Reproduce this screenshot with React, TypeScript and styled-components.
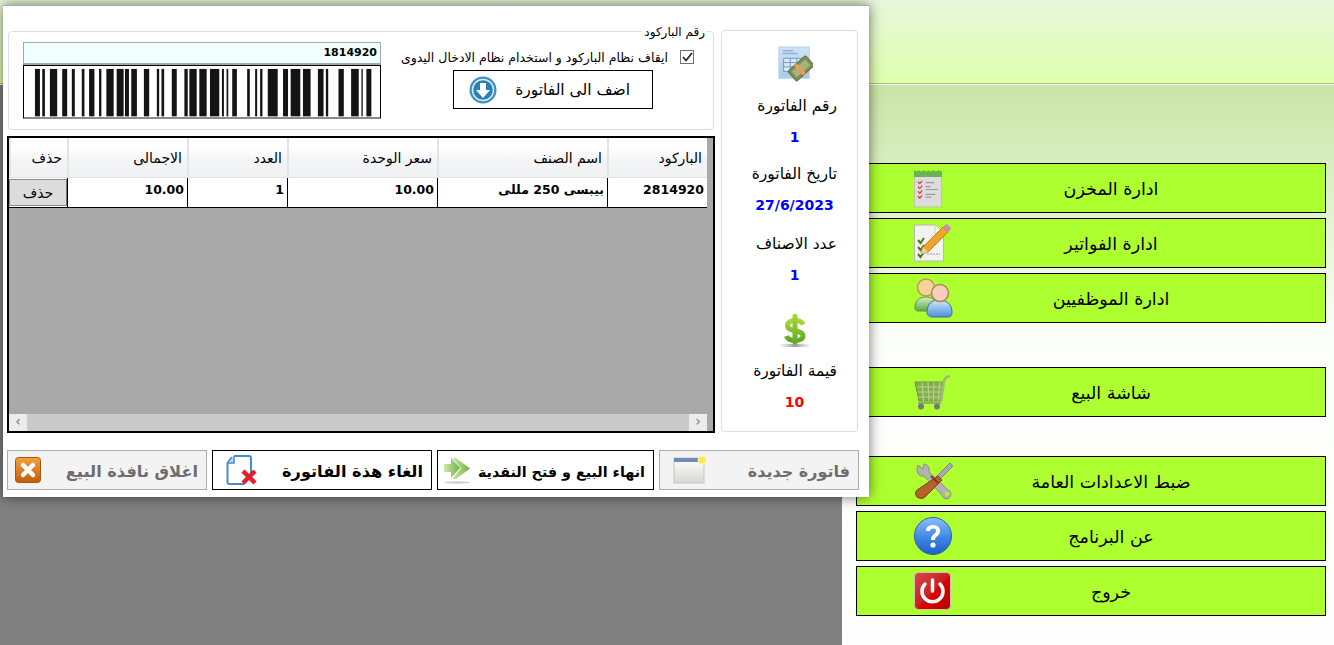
import { FC, ReactNode } from "react";
import styled, { createGlobalStyle } from "styled-components";

const GlobalStyle = createGlobalStyle`
	html, body {
		margin:0;
		padding:0;
		background:#fff;
		font-family:"DejaVu Sans", "Noto Sans", sans-serif;
	}
`;

const BARS:[number, number][] = [
	[103,118],[125,133],[148,170],[185,200],[214,223],[244,252],[266,282],[296,303],[318,340],[349,370],
	[374,386],[393,410],[431,447],[470,477],[484,492],[515,530],[553,563],[568,590],[598,620],[630,658],
	[666,672],[680,685],[697,711],[742,750],[766,772],[781,788],[804,834],[850,865],[873,902],[910,933],
	[955,972],[979,986],[1017,1033],[1055,1078],[1086,1090],[1101,1116],
];

const Barcode:FC = () => (
	<BarcodeSvg viewBox="70 198 1072 156" preserveAspectRatio="none">
		{ BARS.map(([a, b]) => (
			<rect key={ a } x={ a } y={ 207 } width={ b - a } height={ 145 } fill="#141414"/>
		)) }
	</BarcodeSvg>
);

const InvoiceIcon:FC = () => (
	<svg width="36" height="36" viewBox="0 0 38 38">
		<defs>
			<linearGradient id="inv" x1="0" y1="0" x2="0" y2="1">
				<stop offset="0" stopColor="#cfe2f5"/>
				<stop offset="1" stopColor="#a9cbec"/>
			</linearGradient>
		</defs>
		<rect x="2" y="1" width="32" height="33" fill="url(#inv)" stroke="#b6d0ea"/>
		<path d="M6 5h11M6 8h16" stroke="#8fb2d4" strokeWidth="1.5"/>
		<path d="M7 13h21v14H7zM7 17.500h21M7 22h21M14 13v14M21 13v14" fill="#dbe9f7" stroke="#6f95bd"/>
		<g transform="rotate(-42 25 24)">
			<rect x="13" y="17" width="25" height="14" rx="1" fill="#7f8f55" stroke="#5e6d3c"/>
			<rect x="16" y="20" width="19" height="8" fill="#a7b37b"/>
			<rect x="22" y="17" width="4" height="14" fill="#ef9a5c"/>
		</g>
	</svg>
);

const DollarIcon:FC = () => (
	<svg width="34" height="34" viewBox="0 0 34 34">
		<defs>
			<linearGradient id="dol" x1="0" y1="0" x2="0" y2="1">
				<stop offset="0" stopColor="#a6d93a"/>
				<stop offset="1" stopColor="#62a823"/>
			</linearGradient>
			<linearGradient id="dolShadow" x1="0" y1="0" x2="1" y2="0">
				<stop offset="0" stopColor="#aaa" stopOpacity="0"/>
				<stop offset=".5" stopColor="#999"/>
				<stop offset="1" stopColor="#aaa" stopOpacity="0"/>
			</linearGradient>
		</defs>
		<path d="M25 11.500C24 8.500 21 7.500 17 7.500c-4.500 0-7.500 2-7.500 5 0 7 15.500 3.500 15.500 10.500 0 3-3.500 4.500-8 4.500-4.500 0-7.500-1.500-8.500-4.500" fill="none" stroke="url(#dol)" strokeWidth="5"/>
		<rect x="14.500" y="1" width="5" height="30" rx="1.500" fill="url(#dol)"/>
		<rect x="1" y="31" width="32" height="3" fill="url(#dolShadow)"/>
	</svg>
);

const DownCircleIcon:FC = () => (
	<svg width="28" height="28" viewBox="0 0 28 28">
		<circle cx="14" cy="14" r="13.500" fill="#3d8fc4"/>
		<circle cx="14" cy="14" r="10.500" fill="#2f7fb5" stroke="#d8ecf7" strokeWidth="1.500"/>
		<path d="M11 7h6v7h4l-7 8-7-8h4z" fill="#fff"/>
	</svg>
);

const NewWindowIcon:FC = () => (
	<svg width="34" height="30" viewBox="0 0 34 30">
		<defs>
			<linearGradient id="win" x1="0" y1="0" x2="0" y2="1">
				<stop offset="0" stopColor="#fff"/>
				<stop offset="1" stopColor="#d6d6d2"/>
			</linearGradient>
		</defs>
		<rect x="1" y="3" width="30" height="25" fill="url(#win)" stroke="#c4c4c0"/>
		<rect x="1" y="3" width="30" height="4" fill="#6f8cb8"/>
		<circle cx="29" cy="5" r="4" fill="#f5ee4b" stroke="#f9f7a8"/>
	</svg>
);

const ForwardIcon:FC = () => (
	<svg width="28" height="28" viewBox="0 0 28 28">
		<defs>
			<linearGradient id="fwd" x1="0" y1="0" x2="1" y2="0">
				<stop offset="0" stopColor="#cfe8ae"/>
				<stop offset="1" stopColor="#6db33a"/>
			</linearGradient>
		</defs>
		<path d="M1 8h7V2l9 10-9 10v-6H1z" fill="url(#fwd)"/>
		<path d="M9 2h4l14 10.500L13 23H9l9-10.500z" fill="url(#fwd)"/>
		<ellipse cx="14" cy="26.500" rx="13" ry="1.200" fill="#ccc"/>
	</svg>
);

const CancelDocIcon:FC = () => (
	<svg width="32" height="32" viewBox="0 0 32 32">
		<path d="M8 2h15c1.500 0 2 1 2 2v16M6 3L1.500 9v19c0 1.500 1 2 2 2h15" fill="none" stroke="#4a8ad0" strokeWidth="2"/>
		<path d="M8 2v7H2" fill="#bcd7f2" stroke="#4a8ad0" strokeWidth="1.500"/>
		<path d="M17 17l12 12M29 17L17 29" stroke="#e2202c" strokeWidth="4.500"/>
	</svg>
);

const CloseSquareIcon:FC = () => (
	<svg width="26" height="26" viewBox="0 0 26 26">
		<defs>
			<linearGradient id="cls" x1="0" y1="0" x2="0" y2="1">
				<stop offset="0" stopColor="#f5a33a"/>
				<stop offset="1" stopColor="#c35d0b"/>
			</linearGradient>
		</defs>
		<rect x=".5" y=".5" width="25" height="25" rx="3" fill="url(#cls)" stroke="#a6560f"/>
		<path d="M8 8l10 10M18 8L8 18" stroke="#fff" strokeWidth="4.500" strokeLinecap="round"/>
	</svg>
);

const NotepadIcon:FC = () => (
	<svg width="29" height="39" viewBox="0 0 30 40">
		<rect x=".5" y="3" width="28" height="36" fill="#dcdcdc" stroke="#b9c7a0"/>
		<path d="M0 7V1l2.500 1.500L5 1l2.500 1.500L10 1l2.500 1.500L15 1l2.500 1.500L20 1l2.500 1.500L25 1l4 1.500V8H0z" fill="#69b451"/>
		<g fill="none" stroke="#e0323c" strokeWidth="1.200">
			<path d="M4 13l2 2 2.500-3M4 18l2 2 2.500-3M4 23l2 2 2.500-3M4 28l2 2 2.500-3"/>
		</g>
		<path d="M12 14h9M12 18h5M12 21h13M12 26h10M12 29h6" stroke="#9a9a9a" strokeWidth="1.200"/>
	</svg>
);

const PencilDocIcon:FC = () => (
	<svg width="38" height="40" viewBox="0 0 38 40">
		<path d="M.5 2h21l8 8v28H.5z" fill="#f2f2ee" stroke="#b8b8b8"/>
		<path d="M21 2v8h8" fill="#fff" stroke="#c8c8c8"/>
		<path d="M4 17l2.500 3L10 15M4 24l2.500 3L10 22M4 31l2.500 3L10 29" fill="none" stroke="#4d7a1f" strokeWidth="2"/>
		<path d="M13 31h13" stroke="#999" strokeDasharray="2 1"/>
		<path d="M29 4l5 5-20 20-7 2 2-7z" fill="#f0a32c" stroke="#c47e14"/>
		<path d="M31 2c1-1 2-1 3 0l2 2c1 1 1 2 0 3l-2 2-5-5z" fill="#c98ac2"/>
		<path d="M9 24l-2 7 7-2z" fill="#e9d3a6"/>
	</svg>
);

const UsersIcon:FC = () => (
	<svg width="40" height="40" viewBox="0 0 40 40">
		<defs>
			<linearGradient id="usA" x1="0" y1="0" x2="0" y2="1">
				<stop offset="0" stopColor="#d8efc8"/>
				<stop offset="1" stopColor="#5aa845"/>
			</linearGradient>
			<linearGradient id="usB" x1="0" y1="0" x2="0" y2="1">
				<stop offset="0" stopColor="#d5e9fb"/>
				<stop offset="1" stopColor="#4b8fdc"/>
			</linearGradient>
		</defs>
		<path d="M1 30c0-8 5-11 11-11s11 3 11 11c0 2-2 3-5 3H5c-3 0-4-1-4-3z" fill="url(#usA)" stroke="#5d9150"/>
		<circle cx="12" cy="9.500" r="8.500" fill="#f7d29b" stroke="#b69a50" strokeWidth="1.500"/>
		<path d="M14 37c-1 0-1-2-1-3 0-8 5-12 12-12s13 4 13 12c0 3-1 5-4 5H18c-2 0-3-1-4-2z" fill="url(#usB)" stroke="#3d6fa8"/>
		<circle cx="26" cy="15" r="8.500" fill="#f8cdbb" stroke="#a8885a" strokeWidth="1.500"/>
	</svg>
);

const CartIcon:FC = () => (
	<svg width="38" height="36" viewBox="0 0 38 36">
		<path d="M1 8h29l-3 19H5z" fill="#84ad50" stroke="#6d9340"/>
		<path d="M3 13h25M3.500 18h24M4.500 23h22M8 8l1.500 19M14 8l1 19M20 8l-.5 19M26 8l-2 19" stroke="#b9d58c" strokeWidth="1.100"/>
		<path d="M27 27l3-20c.5-3 2-4 6-5" fill="none" stroke="#9db87a" strokeWidth="2.500"/>
		<path d="M4 29h23" stroke="#8fb35e" strokeWidth="2"/>
		<circle cx="7" cy="32.500" r="3" fill="#777"/>
		<circle cx="23" cy="32.500" r="3" fill="#777"/>
	</svg>
);

const ToolsIcon:FC = () => (
	<svg width="40" height="38" viewBox="0 0 40 38">
		<path d="M4 3l5 4 1-5c4 0 6 4 5 8l19 18a4.500 4.500 0 1 1-6 5L10 14C5 15 1 10 4 3z" fill="#b2b2b2" stroke="#8a8a8a"/>
		<circle cx="33" cy="32" r="2.200" fill="#b9f02f"/>
		<path d="M36 1c2 1 3 3 2 4L24 19l-3-3z" fill="#a6acb0" stroke="#7b8488"/>
		<path d="M24 14l4 4-17 17c-2 2-5 2-8 0-2-3-2-5 0-7z" fill="#b5622a" stroke="#7c3f16"/>
		<path d="M17 14l7 7" stroke="#7c3f16" strokeWidth="2"/>
	</svg>
);

const HelpIcon:FC = () => (
	<svg width="38" height="38" viewBox="0 0 38 38">
		<defs>
			<linearGradient id="hlp" x1="0" y1="0" x2="0" y2="1">
				<stop offset="0" stopColor="#8bc0f7"/>
				<stop offset=".55" stopColor="#3f86e6"/>
				<stop offset="1" stopColor="#1f5fc4"/>
			</linearGradient>
		</defs>
		<circle cx="19" cy="19" r="18.500" fill="url(#hlp)" stroke="#2c62a8"/>
		<path d="M12 14c0-4 3-6 7-6s7 2 7 6c0 5-5 5-5 9h-4c0-6 5-6 5-9 0-2-1-2.500-3-2.500s-3 1-3 2.500z" fill="#fff"/>
		<circle cx="19" cy="28" r="2.600" fill="#fff"/>
	</svg>
);

const PowerIcon:FC = () => (
	<svg width="37" height="38" viewBox="0 0 37 38">
		<defs>
			<linearGradient id="pwr" x1="0" y1="0" x2="1" y2="1">
				<stop offset="0" stopColor="#d84a4a"/>
				<stop offset=".5" stopColor="#c92020"/>
				<stop offset=".55" stopColor="#e00000"/>
				<stop offset="1" stopColor="#b00505"/>
			</linearGradient>
		</defs>
		<rect x=".5" y=".5" width="36" height="37" rx="4" fill="url(#pwr)" stroke="#c9c9b0"/>
		<path d="M11 12a10.500 10.500 0 1 0 15 0" fill="none" stroke="#fff" strokeWidth="3.500" strokeLinecap="round"/>
		<path d="M18.500 8v11" stroke="#fff" strokeWidth="3.500" strokeLinecap="round"/>
	</svg>
);

const COLUMNS:{ title:string; cell:ReactNode; width:number }[] = [
	{ title: "الباركود", cell: "2814920", width: 100 },
	{ title: "اسم الصنف", cell: "بيبسى 250 مللى", width: 170 },
	{ title: "سعر الوحدة", cell: "10.00", width: 150 },
	{ title: "العدد", cell: "1", width: 100 },
	{ title: "الاجمالى", cell: "10.00", width: 120 },
];

const MENU:({ title:string; icon:ReactNode; $gap:number })[] = [
	{ title: "ادارة المخزن", icon: <NotepadIcon/>, $gap: 0 },
	{ title: "ادارة الفواتير", icon: <PencilDocIcon/>, $gap: 5 },
	{ title: "ادارة الموظفيين", icon: <UsersIcon/>, $gap: 5 },
	{ title: "شاشة البيع", icon: <CartIcon/>, $gap: 44 },
	{ title: "ضبط الاعدادات العامة", icon: <ToolsIcon/>, $gap: 39 },
	{ title: "عن البرنامج", icon: <HelpIcon/>, $gap: 5 },
	{ title: "خروج", icon: <PowerIcon/>, $gap: 5 },
];

export default function App() {
	return (
		<>
			<GlobalStyle/>
			<Page>
				<Header/>
				<Body>
					<Backdrop/>
					<Menu>
						{ MENU.map((item) => (
							<MenuButton key={ item.title } $gap={ item.$gap }>
								<MenuIcon>{ item.icon }</MenuIcon>
								<MenuLabel>{ item.title }</MenuLabel>
							</MenuButton>
						)) }
					</Menu>
				</Body>

				<Dialog dir="rtl">
					<DialogTop>
						<InfoPanel>
							<InfoIcon $top={ 0 }><InvoiceIcon/></InfoIcon>
							<InfoLabel $top={ 12 }>رقم الفاتورة</InfoLabel>
							<InfoValue $color="#0000ff">1</InfoValue>
							<InfoLabel $top={ 14 }>تاريخ الفاتورة</InfoLabel>
							<InfoValue $color="#0000ff">27/6/2023</InfoValue>
							<InfoLabel $top={ 16 }>عدد الاصناف</InfoLabel>
							<InfoValue $color="#0000ff">1</InfoValue>
							<InfoIcon $top={ 27 }><DollarIcon/></InfoIcon>
							<InfoLabel $top={ 12 }>قيمة الفاتورة</InfoLabel>
							<InfoValue $color="#ff0000">10</InfoValue>
						</InfoPanel>

						<MainColumn>
							<BarcodeGroup>
								<Legend>رقم الباركود</Legend>
								<BarcodeControls>
									<CheckRow>
										<CheckBox>
											<svg width="11" height="10" viewBox="0 0 11 10">
												<path d="M1 5l3 3.500L10 1" fill="none" stroke="#222" strokeWidth="1.700"/>
											</svg>
										</CheckBox>
										<CheckText>ايقاف نظام الباركود و استخدام نظام الادخال اليدوى</CheckText>
									</CheckRow>
									<AddButton>
										<span>اضف الى الفاتورة</span>
										<DownCircleIcon/>
									</AddButton>
								</BarcodeControls>
								<BarcodeBox>
									<BarcodeInput dir="ltr">1814920</BarcodeInput>
									<Barcode/>
								</BarcodeBox>
							</BarcodeGroup>

							<Grid>
								<GridHead>
									{ COLUMNS.map((col) => (
										<HeadCell key={ col.title } $width={ col.width }>{ col.title }</HeadCell>
									)) }
									<HeadCell $width={ 58 }>حذف</HeadCell>
								</GridHead>
								<GridRow>
									{ COLUMNS.map((col) => (
										<DataCell key={ col.title } $width={ col.width }>{ col.cell }</DataCell>
									)) }
									<DeleteCell>
										<DeleteButton>حذف</DeleteButton>
									</DeleteCell>
								</GridRow>
								<GridEmpty/>
								<ScrollBar dir="ltr">
									<ScrollArrow>‹</ScrollArrow>
									<ScrollArrow>›</ScrollArrow>
								</ScrollBar>
							</Grid>
						</MainColumn>
					</DialogTop>

					<ActionRow>
						<ActionButton $muted $width={ 200 } $inset={ 13 }>
							<ActionText $size={ 16 }>فاتورة جديدة</ActionText>
							<NewWindowIcon/>
						</ActionButton>
						<ActionButton $width={ 217 } $inset={ 5 }>
							<ActionText $size={ 14.3 }>انهاء البيع و فتح النقدية</ActionText>
							<ForwardIcon/>
						</ActionButton>
						<ActionButton $width={ 220 } $inset={ 13 }>
							<ActionText $size={ 16.2 }>الغاء هذة الفاتورة</ActionText>
							<CancelDocIcon/>
						</ActionButton>
						<ActionButton $muted $width={ 200 } $inset={ 7 }>
							<ActionText $size={ 16.2 }>اغلاق نافذة البيع</ActionText>
							<CloseSquareIcon/>
						</ActionButton>
					</ActionRow>
				</Dialog>
			</Page>
		</>
	);
}

const Page = styled.div`
	position:relative;
	width:1334px;
	height:645px;
	overflow:hidden;
	display:flex;
	flex-direction:column;
	color:#000;
`;

const Header = styled.div`
	height:84px;
	flex:none;
	box-sizing:border-box;
	background:linear-gradient(#e9f6dc, #deffac);
	border-bottom:1px solid #a9c27e;
`;

const Body = styled.div`
	flex:1;
	display:flex;
	border-top:1px solid #fff;
`;

const Backdrop = styled.div`
	width:842px;
	flex:none;
	background:#808080;
`;

const Menu = styled.div`
	flex:1;
	box-sizing:border-box;
	padding:78px 8px 0 14px;
	background:linear-gradient(#c9e5a6 0, #fdfffb 255px, #fdfdfd 100%);
	display:flex;
	flex-direction:column;
`;

const MenuButton = styled.div<{ $gap:number }>`
	height:50px;
	flex:none;
	box-sizing:border-box;
	margin-top:${ (p) => p.$gap }px;
	padding:0 57px;
	display:flex;
	align-items:center;
	background:#adff2f;
	border:1px solid #000;
`;

const MenuIcon = styled.div`
	width:40px;
	flex:none;
	display:flex;
	justify-content:flex-start;

	svg {
		display:block;
	}
`;

const MenuLabel = styled.div`
	flex:1;
	padding-top:2px;
	text-align:center;
	font-size:17.5px;
	direction:rtl;
`;

const Dialog = styled.div`
	position:absolute;
	left:3px;
	top:5px;
	width:866px;
	height:492px;
	box-sizing:border-box;
	padding:24px 5px 0 5px;
	background:#fff;
	border-top:1px solid #a9a9a9;
	box-shadow:0 0 12px rgba(0,0,0,0.55);
	display:flex;
	flex-direction:column;
`;

const DialogTop = styled.div`
	display:flex;
	gap:6px;
	padding-right:6px;
	height:403px;
`;

const InfoPanel = styled.div`
	width:137px;
	height:402px;
	flex:none;
	box-sizing:border-box;
	padding:15px 20px 0 30px;
	background:#fff;
	border:1px solid #d7e0e8;
	border-radius:4px;
	display:flex;
	flex-direction:column;
`;

const InfoIcon = styled.div<{ $top:number }>`
	margin-top:${ (p) => p.$top }px;
	display:flex;
	justify-content:center;

	svg {
		display:block;
	}
`;

const InfoLabel = styled.div<{ $top:number }>`
	margin-top:${ (p) => p.$top }px;
	height:24px;
	line-height:24px;
	font-size:15.5px;
	white-space:nowrap;
`;

const InfoValue = styled.div<{ $color:string }>`
	margin-top:8px;
	height:22px;
	line-height:22px;
	text-align:center;
	font-size:14px;
	font-weight:bold;
	color:${ (p) => p.$color };
`;

const MainColumn = styled.div`
	flex:none;
	width:708px;
	display:flex;
	flex-direction:column;
	gap:6px;
`;

const BarcodeGroup = styled.div`
	position:relative;
	height:99px;
	box-sizing:border-box;
	padding:10px 19px 0 14px;
	margin:1px 1px 0;
	border:1px solid #d7e0e8;
	border-radius:4px;
	display:flex;
	justify-content:space-between;
`;

const Legend = styled.div`
	position:absolute;
	top:-7px;
	right:6px;
	padding:0 2px;
	background:#fff;
	font-size:12px;
	line-height:14px;
`;

const BarcodeControls = styled.div`
	width:293px;
	display:flex;
	flex-direction:column;
	padding-top:8px;
`;

const CheckRow = styled.div`
	display:flex;
	align-items:center;
	gap:12px;
	height:14px;
`;

const CheckBox = styled.div`
	width:14px;
	height:14px;
	flex:none;
	box-sizing:border-box;
	border:1px solid #707070;
	display:flex;
	align-items:center;
	justify-content:center;
`;

const CheckText = styled.div`
	font-size:12.500px;
	white-space:nowrap;
`;

const AddButton = styled.div`
	width:200px;
	height:39px;
	margin:6px 41px 0 0;
	box-sizing:border-box;
	padding:0 22px 0 15px;
	border:1px solid #000;
	display:flex;
	align-items:center;
	justify-content:space-between;
	font-size:15.500px;
`;

const BarcodeBox = styled.div`
	width:358px;
	display:flex;
	flex-direction:column;
`;

const BarcodeInput = styled.div`
	height:23px;
	box-sizing:border-box;
	padding:0 3px;
	background:#f0ffff;
	border:1px solid #a5a5a5;
	border-bottom-width:2px;
	text-align:right;
	font-size:11px;
	font-weight:bold;
	line-height:19px;
`;

const BarcodeSvg = styled.svg`
	display:block;
	width:358px;
	height:54px;
	box-sizing:border-box;
	background:#fff;
	border:1px solid #000;
	border-bottom:2px solid #8a8a8a;
`;

const Grid = styled.div`
	height:298px;
	box-sizing:border-box;
	background:#a9a9a9;
	border:2px solid #000;
	display:flex;
	flex-direction:column;
`;

const GridHead = styled.div`
	display:flex;
	height:40px;
	flex:none;
	padding-right:6px;
`;

const HeadCell = styled.div<{ $width:number }>`
	width:${ (p) => p.$width }px;
	flex:none;
	box-sizing:border-box;
	padding:11px 5px 0 0;
	background:linear-gradient(#fff 0, #fff 10px, #f2f4f6 22px, #f1f2f4 100%);
	border-left:2px solid #e4e4e4;
	border-bottom:1px solid #e0e0e0;
	font-size:14px;
	line-height:18px;
	white-space:nowrap;
`;

const GridRow = styled.div`
	display:flex;
	height:30px;
	flex:none;
	padding-right:6px;
`;

const DataCell = styled.div<{ $width:number }>`
	width:${ (p) => p.$width }px;
	flex:none;
	box-sizing:border-box;
	padding:0 3px 0 0;
	background:#fff;
	border-left:1px solid #000;
	border-bottom:1px solid #000;
	font-size:12.500px;
	font-weight:bold;
	line-height:24px;
	white-space:nowrap;
`;

const DeleteCell = styled.div`
	width:58px;
	flex:none;
	box-sizing:border-box;
	padding:1px 0;
	background:#fff;
	border-bottom:1px solid #000;
`;

const DeleteButton = styled.div`
	height:27px;
	box-sizing:border-box;
	background:#dcdcdc;
	border:1px solid #8a8a8a;
	border-right-color:#777;
	text-align:center;
	font-size:14px;
	line-height:26px;
`;

const GridEmpty = styled.div`
	flex:1;
`;

const ScrollBar = styled.div`
	height:17px;
	flex:none;
	margin-right:6px;
	background:#cacaca;
	display:flex;
	justify-content:space-between;
`;

const ScrollArrow = styled.div`
	width:18px;
	background:#ececec;
	color:#777;
	text-align:center;
	font-size:14px;
	line-height:15px;
`;

const ActionRow = styled.div`
	display:flex;
	gap:5px;
	margin-top:17px;
	padding-right:5px;
`;

const ActionButton = styled.div<{ $muted?:boolean; $width:number; $inset:number }>`
	width:${ (p) => p.$width }px;
	height:40px;
	flex:none;
	box-sizing:border-box;
	padding:0 8px 0 ${ (p) => p.$inset }px;
	background:${ (p) => p.$muted ? "#f3f3f3" : "#fff" };
	color:${ (p) => p.$muted ? "#6d6d6d" : "#000" };
	border:1px solid ${ (p) => p.$muted ? "#adadad" : "#000" };
	display:flex;
	align-items:center;
	justify-content:space-between;

	svg {
		display:block;
	}
`;

const ActionText = styled.div<{ $size:number }>`
	padding-top:3px;
	font-size:${ (p) => p.$size }px;
	font-weight:bold;
	white-space:nowrap;
`;
